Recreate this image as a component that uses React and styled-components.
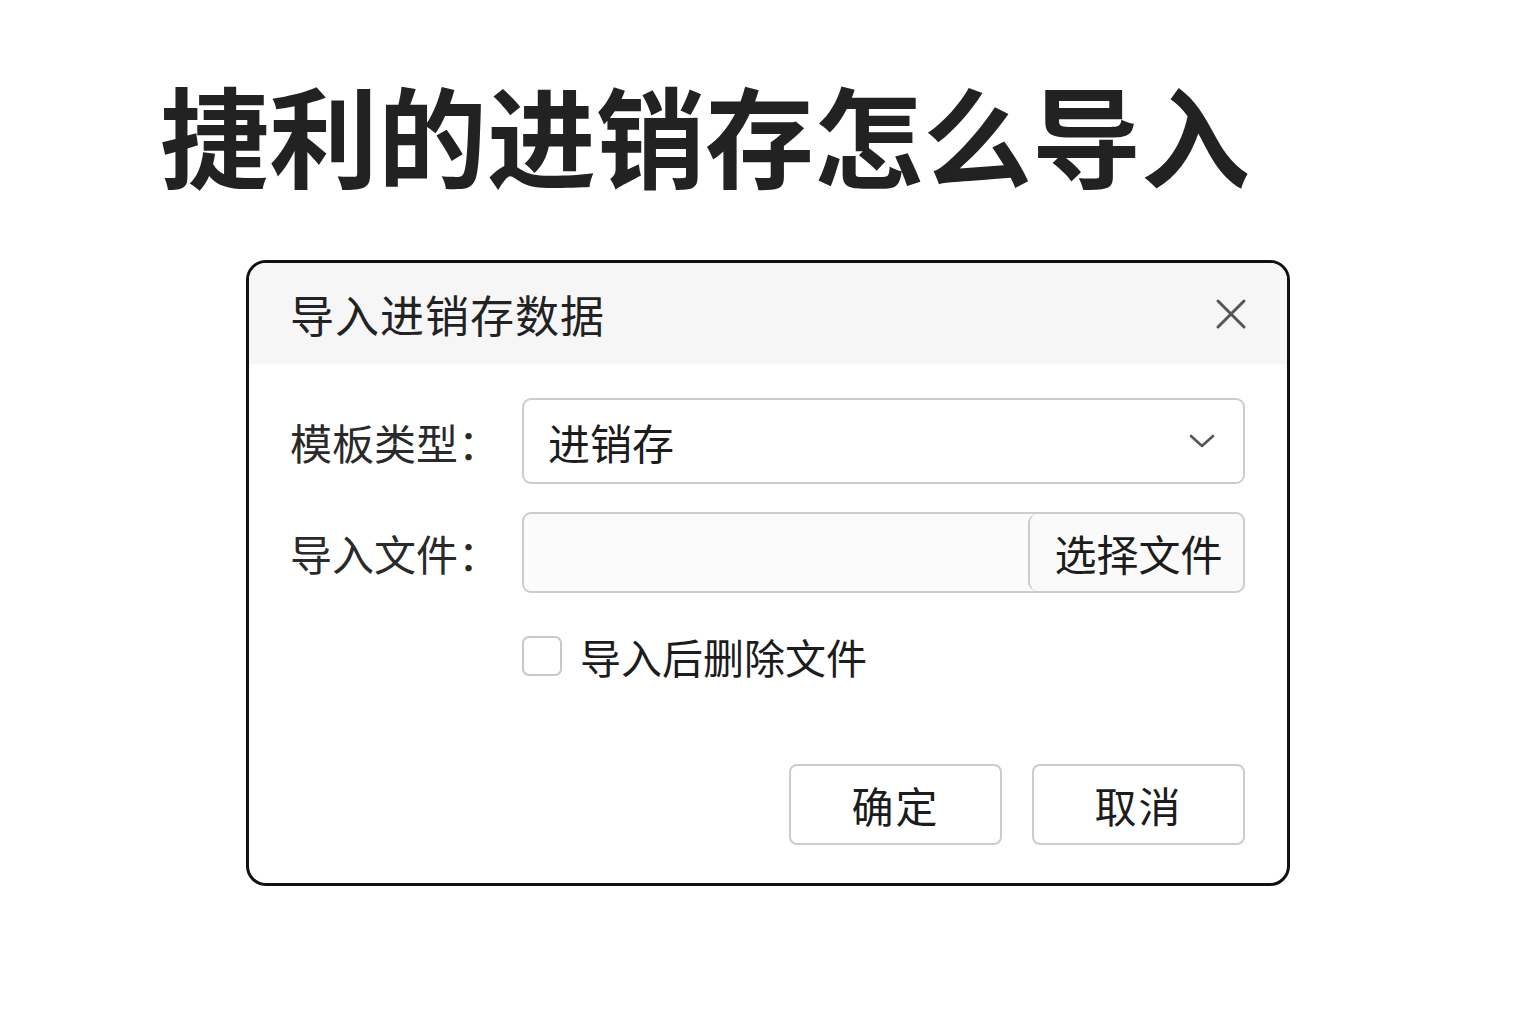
import React from 'react';
import styled, { createGlobalStyle } from 'styled-components';

const GlobalStyle = createGlobalStyle`
  html, body {
    margin: 0;
    padding: 0;
    background: #ffffff;
    font-family: "Noto Sans CJK SC", "Noto Sans", sans-serif;
  }
`;

const Page = styled.div`
  width: 1536px;
  height: 1024px;
  padding: 58px 0 0 160px;
  box-sizing: border-box;
`;

const Title = styled.h1`
  margin: 0;
  font-size: 109px;
  line-height: 150px;
  font-weight: 700;
  color: #222222;
  letter-spacing: 0;
`;

const Dialog = styled.div`
  margin: 52px 0 0 86px;
  width: 1044px;
  height: 626px;
  box-sizing: border-box;
  border: 3px solid #111111;
  border-radius: 20px;
  overflow: hidden;
  background: #ffffff;
  display: flex;
  flex-direction: column;
`;

const Header = styled.div`
  height: 101px;
  background: #f6f6f6;
  display: flex;
  align-items: center;
  justify-content: space-between;
  padding: 0 39px 0 41px;
`;

const HeaderTitle = styled.div`
  font-size: 44px;
  color: #222222;
  letter-spacing: 1px;
`;

const CloseButton = styled.button`
  border: none;
  background: none;
  padding: 0;
  width: 34px;
  height: 34px;
  display: flex;
  align-items: center;
  justify-content: center;
  cursor: pointer;
`;

const Body = styled.div`
  flex: 1;
  padding: 34px 42px 0 41px;
  display: flex;
  flex-direction: column;
`;

const Row = styled.div`
  display: flex;
  align-items: center;
  margin-bottom: ${p => p.gap || 0}px;
`;

const Label = styled.div`
  width: 232px;
  font-size: 42px;
  color: #2a2a2a;
`;

const SelectBox = styled.div`
  flex: 1;
  height: 86px;
  box-sizing: border-box;
  border: 2px solid #cccccc;
  border-radius: 9px;
  display: flex;
  align-items: center;
  justify-content: space-between;
  padding: 0 28px 0 24px;
  font-size: 42px;
  color: #1c1c1c;
`;

const FileInput = styled.div`
  flex: 1;
  height: 81px;
  box-sizing: border-box;
  border: 2px solid #cccccc;
  border-radius: 9px;
  background: #fbfbfb;
  display: flex;
  justify-content: flex-end;
  overflow: hidden;
`;

const PickButton = styled.button`
  width: 215px;
  height: 100%;
  border: none;
  border-left: 2px solid #cccccc;
  border-radius: 9px;
  background: #fafafa;
  font-family: inherit;
  font-size: 42px;
  color: #1c1c1c;
  padding: 0 0 0 4px;
`;

const CheckRow = styled.label`
  display: flex;
  align-items: center;
  margin-left: 232px;
  margin-top: 33px;
  gap: 18px;
  font-size: 41px;
  color: #1c1c1c;
`;

const Box = styled.span`
  width: 40px;
  height: 40px;
  box-sizing: border-box;
  border: 2px solid #c8c8c8;
  border-radius: 7px;
  background: #ffffff;
`;

const Footer = styled.div`
  display: flex;
  justify-content: flex-end;
  gap: 30px;
  margin-top: 78px;
`;

const ActionButton = styled.button`
  width: 213px;
  height: 81px;
  border: 2px solid #cccccc;
  border-radius: 8px;
  background: #ffffff;
  font-family: inherit;
  font-size: 42px;
  color: #1c1c1c;
  letter-spacing: 2px;
  padding: 0;
`;

const Chevron = () => (
  <svg width="26" height="16" viewBox="0 0 26 16" fill="none">
    <path d="M2 3 L13 13 L24 3" stroke="#555" strokeWidth="2.6" strokeLinecap="round" strokeLinejoin="round" />
  </svg>
);

const CloseIcon = () => (
  <svg width="32" height="32" viewBox="0 0 32 32">
    <path d="M3 3 L29 29 M29 3 L3 29" stroke="#555" strokeWidth="3" strokeLinecap="round" />
  </svg>
);

const App = () => (
  <Page>
    <GlobalStyle />
    <Title>捷利的进销存怎么导入</Title>
    <Dialog>
      <Header>
        <HeaderTitle>导入进销存数据</HeaderTitle>
        <CloseButton aria-label="关闭"><CloseIcon /></CloseButton>
      </Header>
      <Body>
        <Row gap={28}>
          <Label>模板类型：</Label>
          <SelectBox>
            <span>进销存</span>
            <Chevron />
          </SelectBox>
        </Row>
        <Row>
          <Label>导入文件：</Label>
          <FileInput>
            <PickButton>选择文件</PickButton>
          </FileInput>
        </Row>
        <CheckRow>
          <Box />
          <span>导入后删除文件</span>
        </CheckRow>
        <Footer>
          <ActionButton>确定</ActionButton>
          <ActionButton>取消</ActionButton>
        </Footer>
      </Body>
    </Dialog>
  </Page>
);

export default App;
